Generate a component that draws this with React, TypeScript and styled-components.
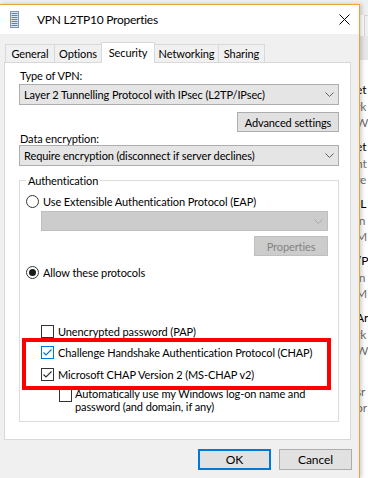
import React from "react";
import styled, { createGlobalStyle } from "styled-components";

const GlobalStyle = createGlobalStyle`
    html, body {
        margin: 0;
        padding: 0;
    }
    body {
        background: #f0f0f0;
        font-family: Lato, "Liberation Sans", Arial, sans-serif;
        font-size: 11px;
        letter-spacing: -0.1px;
        color: #000;
        overflow: hidden;
    }
`;

const Desktop = styled.div`
    display: flex;
    width: 368px;
    height: 478px;
    overflow: hidden;
`;

const Dialog = styled.div`
    flex: 0 0 360px;
    box-sizing: border-box;
    margin-top: 4px;
    background: #f0f0f0;
    border-top: 1px solid #eaa43f;
    border-right: 1px solid #eaa43f;
    box-shadow: 2px 0 4px rgba(0, 0, 0, 0.18);
    position: relative;
    z-index: 1;
    display: flex;
    flex-direction: column;
`;

const TitleBar = styled.div`
    height: 29px;
    background: #fff;
    display: flex;
    align-items: center;
    padding-left: 10px;
`;

const Title = styled.div`
    flex: 1;
    margin-left: 18px;
    font-size: 12px;
    letter-spacing: -0.25px;
`;

const Body = styled.div`
    padding-top: 8px;
`;

const TabRow = styled.div`
    display: flex;
    align-items: flex-end;
    height: 20px;
    padding-left: 5px;
`;

const Tab = styled.div<{ $w: number; $active?: boolean }>`
    box-sizing: border-box;
    width: ${p => p.$w}px;
    height: ${p => (p.$active ? 21 : 18)}px;
    margin-right: -1px;
    margin-bottom: ${p => (p.$active ? -1 : 0)}px;
    border: 1px solid #d9d9d9;
    border-bottom: none;
    background: ${p => (p.$active ? "#fff" : "#f0f0f0")};
    position: relative;
    z-index: ${p => (p.$active ? 2 : 0)};
    display: flex;
    align-items: center;
    justify-content: center;
    padding-bottom: ${p => (p.$active ? 2 : 0)}px;
`;

const Panel = styled.div`
    box-sizing: border-box;
    margin-left: 4px;
    width: 347px;
    height: 378px;
    background: #fff;
    border: 1px solid #d9d9d9;
    padding: 5px 11px 0 14px;
`;

const Label = styled.div<{ $h: number }>`
    line-height: ${p => p.$h}px;
    padding-left: 1px;
`;

const Select = styled.div<{ $disabled?: boolean }>`
    box-sizing: border-box;
    height: ${p => (p.$disabled ? 20 : 21)}px;
    border: 1px solid ${p => (p.$disabled ? "#bfbfbf" : "#adadad")};
    background: ${p => (p.$disabled ? "#cccccc" : "#e5e5e5")};
    display: flex;
    align-items: center;
    justify-content: space-between;
    padding: 0 4px 0 4px;
`;

const ButtonRow = styled.div<{ $mt: number }>`
    display: flex;
    justify-content: flex-end;
    margin-top: ${p => p.$mt}px;
`;

const Button = styled.div<{ $w: number; $disabled?: boolean; $default?: boolean }>`
    box-sizing: border-box;
    width: ${p => p.$w}px;
    height: 20px;
    border: ${p => (p.$default ? "2px solid #0078d7" : p.$disabled ? "1px solid #bfbfbf" : "1px solid #adadad")};
    background: ${p => (p.$disabled ? "#cccccc" : "#e1e1e1")};
    color: ${p => (p.$disabled ? "#838383" : "#000")};
    display: flex;
    align-items: center;
    justify-content: center;
`;

const Group = styled.fieldset`
    margin: 7px 0 0 0;
    padding: 0 0 8px 6px;
    border: 1px solid #dcdcdc;
    min-width: 0;
`;

const Legend = styled.legend`
    padding: 0 2px;
    line-height: 15px;
`;

const OptionRow = styled.div<{ $mt?: number; $indent?: number }>`
    display: flex;
    align-items: center;
    gap: 4px;
    height: 14px;
    margin-top: ${p => p.$mt || 0}px;
    margin-left: ${p => p.$indent || 0}px;
`;

const RadioCircle = styled.span`
    box-sizing: border-box;
    width: 13px;
    height: 13px;
    border: 1px solid #333;
    border-radius: 50%;
    background: #fff;
    display: flex;
    align-items: center;
    justify-content: center;
    flex-shrink: 0;
`;

const RadioDot = styled.span`
    width: 7px;
    height: 7px;
    border-radius: 50%;
    background: #1a1a1a;
`;

const Box = styled.span<{ $focus?: boolean }>`
    box-sizing: border-box;
    width: 13px;
    height: 13px;
    border: 1px solid ${p => (p.$focus ? "#0078d7" : "#333")};
    background: #fff;
    display: flex;
    align-items: center;
    justify-content: center;
    flex-shrink: 0;
`;

const Indent = styled.div`
    margin: 3px 10px 0 15px;
`;

const Highlight = styled.div`
    box-sizing: border-box;
    position: relative;
    z-index: 1;
    width: 309px;
    margin-left: -4px;
    border: 4px solid #ff0000;
    padding: 3px 0 5px 15px;
    display: flex;
    flex-direction: column;
    gap: 8px;
`;

const AutoRow = styled.div`
    display: flex;
    align-items: flex-start;
    gap: 3px;
    margin: -3px 0 0 33px;
    line-height: 13px;
`;

const AutoBox = styled(Box)`
    margin-top: 2px;
`;

const Footer = styled.div`
    display: flex;
    justify-content: flex-end;
    gap: 8px;
    padding-right: 7px;
    margin-top: 9px;
`;

const FooterButton = styled(Button)`
    height: 21px;
    font-size: 12px;
`;

const BackWindow = styled.div`
    flex: 1;
    background: #fff;
    display: flex;
    flex-direction: column;
    overflow: hidden;
`;

const BackHead = styled.div`
    height: 15px;
    background: #f0f0f0;
`;

const BackStrip = styled.div`
    box-sizing: border-box;
    height: 21px;
    margin-left: 4px;
    background: #f0f0f0;
    border-top: 1px solid #d5d5d5;
    border-left: 1px solid #d5d5d5;
`;

const BackBar = styled.div`
    height: 24px;
    background: #e8e8e8;
`;

const BackList = styled.div`
    padding-top: 21px;
    white-space: nowrap;
    font-size: 12px;
`;

const BackGroup = styled.div`
    margin-bottom: 7px;
    margin-left: -4px;
`;

const BackTitle = styled.div`
    line-height: 18px;
    height: 18px;
    color: #000;
`;

const BackLine = styled.div`
    line-height: 16px;
    color: #707070;
`;

const Chevron = ({ color }: { color: string }) => (
    <svg width="9" height="5" viewBox="0 0 9 5">
        <path d="M0.5 0.5 L4.5 4.5 L8.5 0.5" fill="none" stroke={color} strokeWidth="1" />
    </svg>
);

const Check = ({ color }: { color: string }) => (
    <svg width="11" height="11" viewBox="0 0 11 11">
        <path d="M1.5 5.5 L4 8 L9.5 2.5" fill="none" stroke={color} strokeWidth="1.2" />
    </svg>
);

const backItems = [
    ["et", "rk", "Wi"],
    ["et", "nt", "re"],
    ["-L", "in", "M"],
    ["/P", "in", "M"],
    ["Ar", "rk", "Wi"],
    ["", "sr", "or"],
];

const tabs = [
    { name: "General", w: 50 },
    { name: "Options", w: 48 },
    { name: "Security", w: 54, active: true },
    { name: "Networking", w: 65 },
    { name: "Sharing", w: 47 },
];

function App() {
    return (
        <Desktop>
            <GlobalStyle />
            <Dialog>
                <TitleBar>
                    <svg width="9" height="17" viewBox="0 0 9 17">
                        <rect x="0.5" y="0.5" width="8" height="16" fill="#dfe6ee" stroke="#8496ab" />
                        {[2, 4, 6, 8, 10, 12, 14].map(y => (
                            <rect key={y} x="1.5" y={y} width="6" height="1" fill="#5b82b3" />
                        ))}
                    </svg>
                    <Title>VPN L2TP10 Properties</Title>
                    <svg width="11" height="11" viewBox="0 0 11 11" style={{ marginRight: 9 }}>
                        <path d="M0.5 0.5 L10.5 10.5 M10.5 0.5 L0.5 10.5" stroke="#000" strokeWidth="1" />
                    </svg>
                </TitleBar>
                <Body>
                    <TabRow>
                        {tabs.map(t => (
                            <Tab key={t.name} $w={t.w} $active={t.active}>
                                {t.name}
                            </Tab>
                        ))}
                    </TabRow>
                    <Panel>
                        <Label $h={16}>Type of VPN:</Label>
                        <Select>
                            <span>Layer 2 Tunnelling Protocol with IPsec (L2TP/IPsec)</span>
                            <Chevron color="#606060" />
                        </Select>
                        <ButtonRow $mt={7}>
                            <Button $w={102}>Advanced settings</Button>
                        </ButtonRow>
                        <Label $h={13}>Data encryption:</Label>
                        <Select>
                            <span>Require encryption (disconnect if server declines)</span>
                            <Chevron color="#606060" />
                        </Select>
                        <Group>
                            <Legend>Authentication</Legend>
                            <OptionRow $mt={6}>
                                <RadioCircle />
                                <span>Use Extensible Authentication Protocol (EAP)</span>
                            </OptionRow>
                            <Indent>
                                <Select $disabled>
                                    <span />
                                    <Chevron color="#a8a8a8" />
                                </Select>
                                <ButtonRow $mt={5}>
                                    <Button $w={74} $disabled>
                                        Properties
                                    </Button>
                                </ButtonRow>
                            </Indent>
                            <OptionRow $mt={9}>
                                <RadioCircle>
                                    <RadioDot />
                                </RadioCircle>
                                <span>Allow these protocols</span>
                            </OptionRow>
                            <OptionRow $mt={45} $indent={15}>
                                <Box />
                                <span>Unencrypted password (PAP)</span>
                            </OptionRow>
                            <Highlight>
                                <OptionRow>
                                    <Box $focus>
                                        <Check color="#0078d7" />
                                    </Box>
                                    <span>Challenge Handshake Authentication Protocol (CHAP)</span>
                                </OptionRow>
                                <OptionRow>
                                    <Box>
                                        <Check color="#333" />
                                    </Box>
                                    <span>Microsoft CHAP Version 2 (MS-CHAP v2)</span>
                                </OptionRow>
                            </Highlight>
                            <AutoRow>
                                <AutoBox />
                                <span>
                                    Automatically use my Windows log-on name and
                                    <br />
                                    password (and domain, if any)
                                </span>
                            </AutoRow>
                        </Group>
                    </Panel>
                    <Footer>
                        <FooterButton $w={73} $default>
                            OK
                        </FooterButton>
                        <FooterButton $w={73}>Cancel</FooterButton>
                    </Footer>
                </Body>
            </Dialog>
            <BackWindow>
                <BackHead />
                <BackStrip />
                <BackBar />
                <BackList>
                    {backItems.map((g, i) => (
                        <BackGroup key={i}>
                            <BackTitle>{g[0]}</BackTitle>
                            <BackLine>{g[1]}</BackLine>
                            <BackLine>{g[2]}</BackLine>
                        </BackGroup>
                    ))}
                </BackList>
            </BackWindow>
        </Desktop>
    );
}

export default App;
